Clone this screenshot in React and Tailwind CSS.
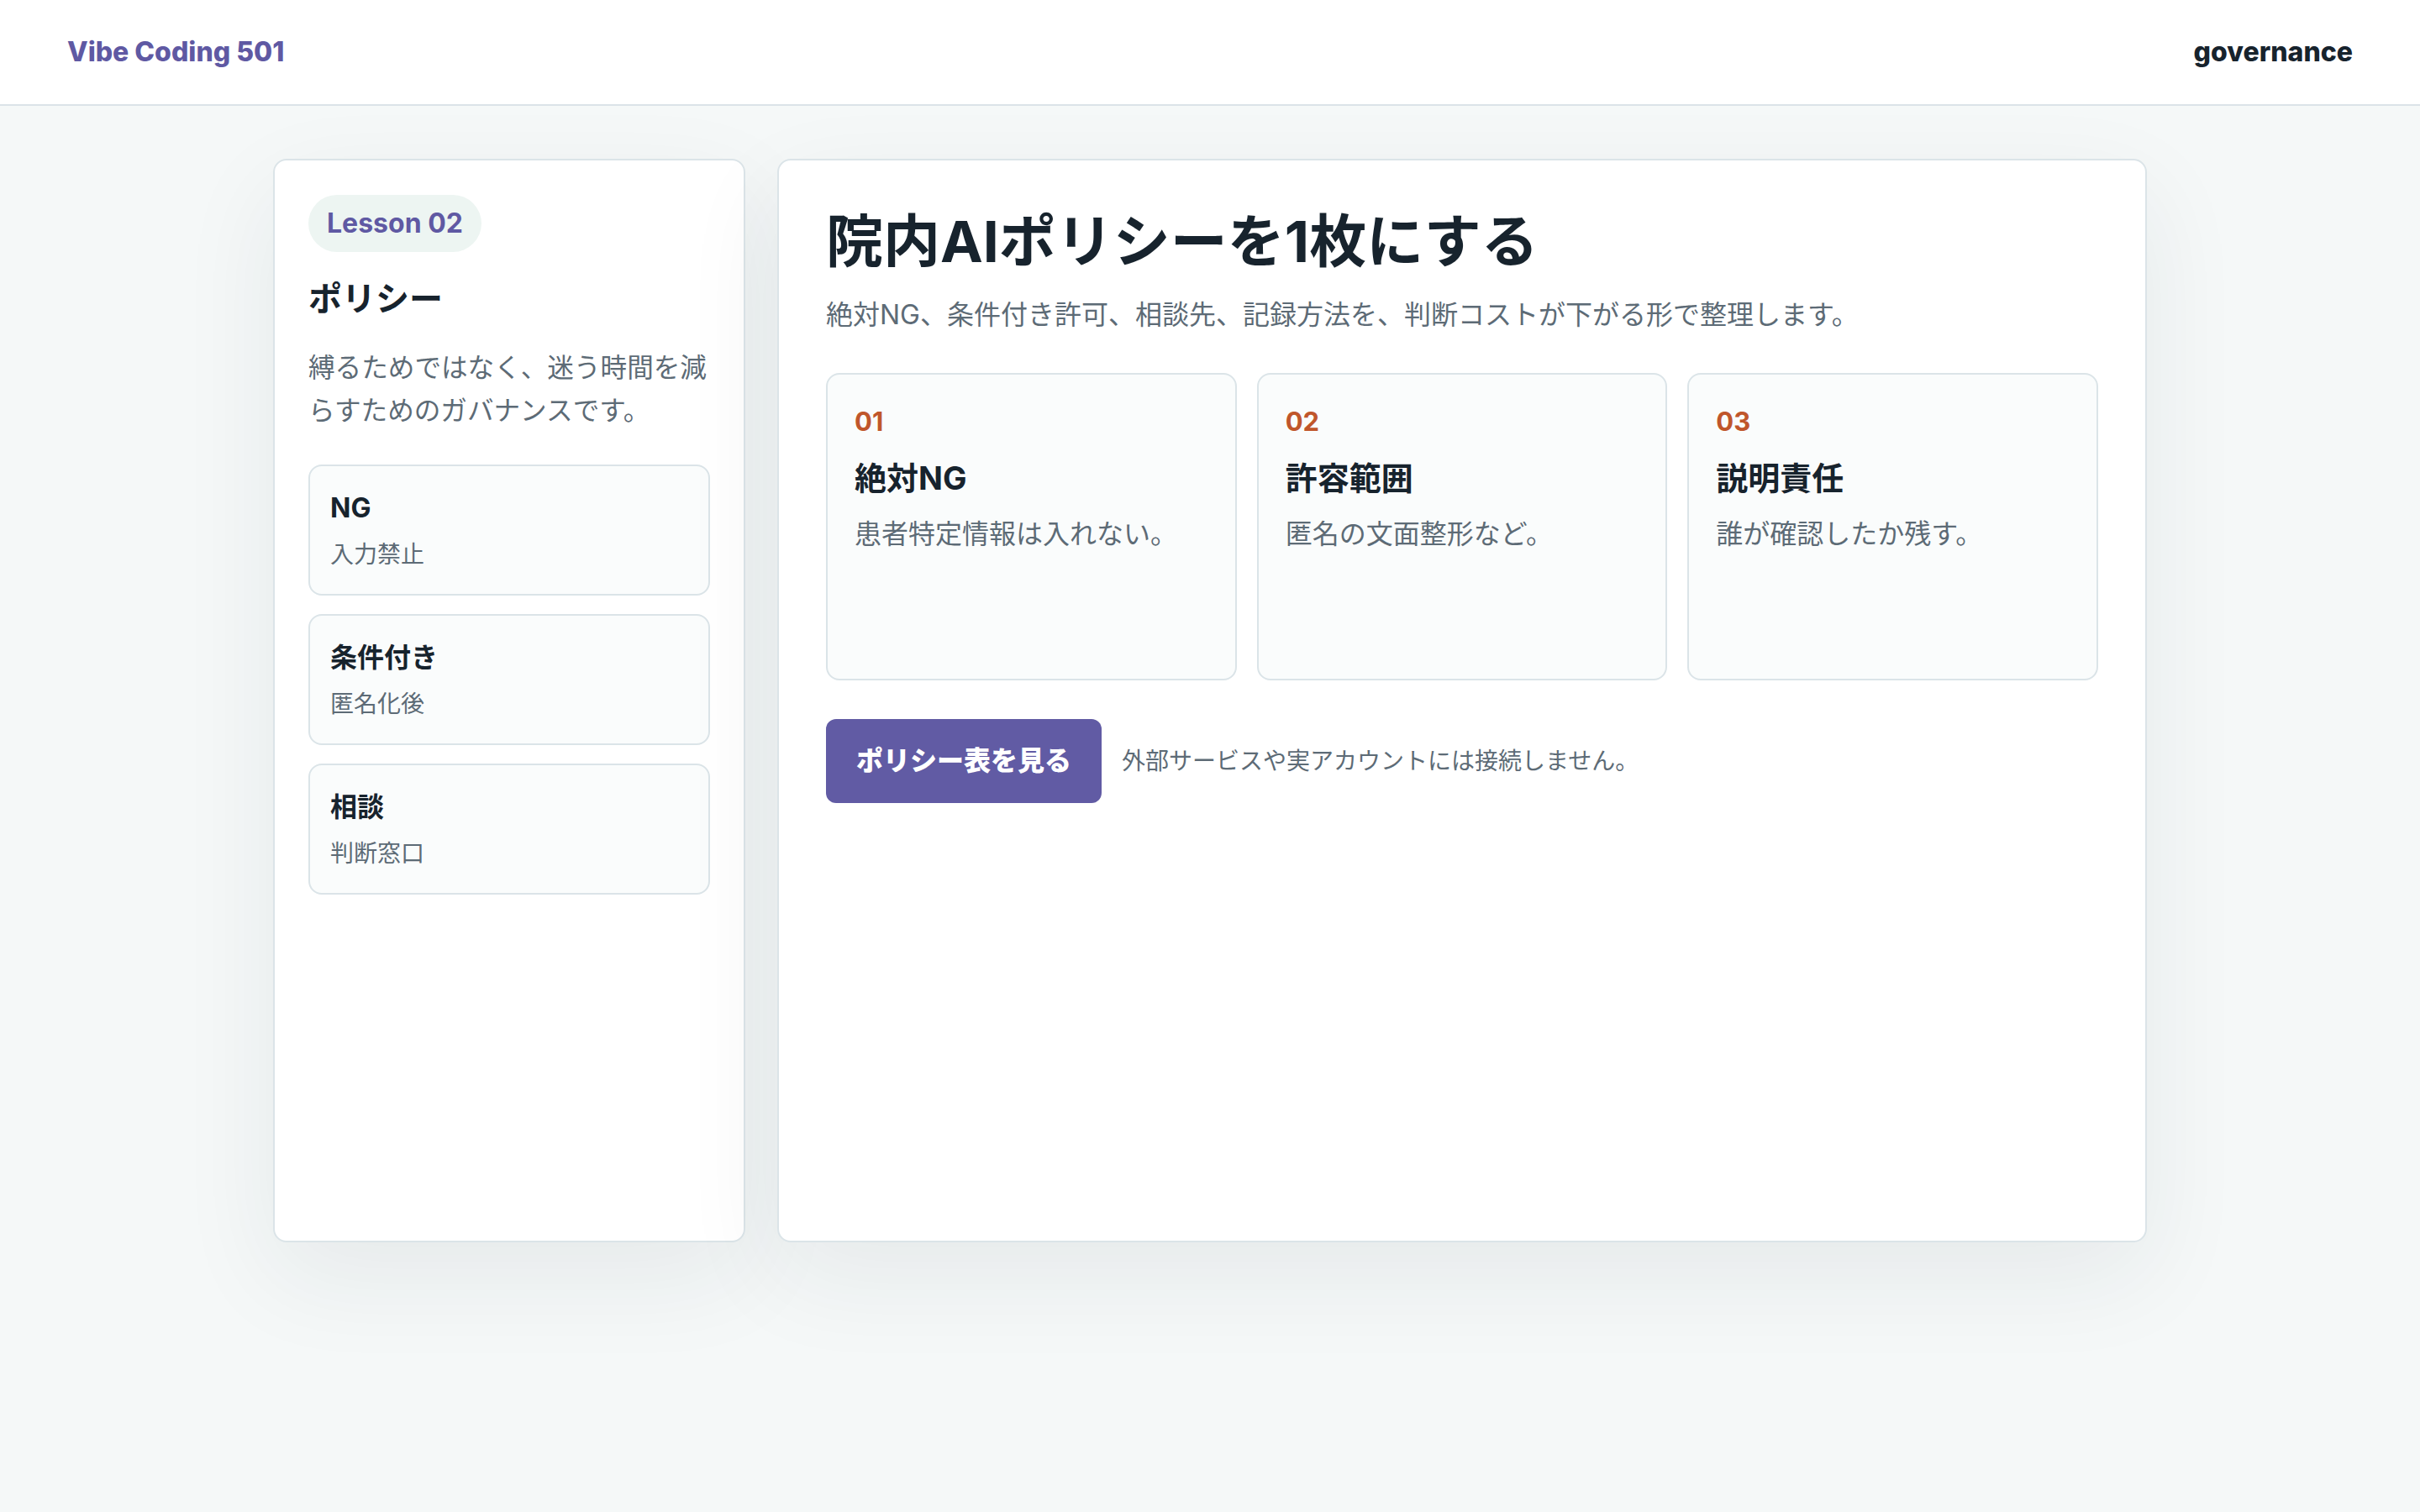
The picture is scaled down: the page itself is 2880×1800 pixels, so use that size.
import React from "react";

const FONT = { fontFamily: '"Inter", "Noto Sans CJK JP", "Noto Sans", sans-serif' };

function SideItem({ title, sub }) {
  return (
    <div className="rounded-2xl border-2 border-[#dbe4e8] bg-[#fafcfc] px-6 py-6">
      <div className="text-[32px] font-bold leading-[51px] text-[#17232d]">{title}</div>
      <div className="mt-2 text-[28px] leading-[45px] text-[#5d6b76]">{sub}</div>
    </div>
  );
}

function Feature({ num, title, desc }) {
  return (
    <div className="min-h-[366px] rounded-2xl border-2 border-[#dbe4e8] bg-[#fafcfc] p-8">
      <div className="text-[31px] font-bold leading-[48px] text-[#c0562b]">{num}</div>
      <div className="mt-4 text-[38px] font-bold leading-[54px] text-[#17232d]">{title}</div>
      <div className="mt-4 text-[32px] leading-[48px] text-[#5d6b76]">{desc}</div>
    </div>
  );
}

export default function App() {
  return (
    <div className="min-h-screen bg-[#f5f8f8] text-[#17232d]" style={FONT}>
      <header className="flex h-[126px] items-center justify-between border-b-2 border-[#dbe3e8] bg-white px-20">
        <div className="text-[32px] font-extrabold text-[#5f59a3]">Vibe Coding 501</div>
        <div className="text-[32px] font-extrabold text-[#17232d]">governance</div>
      </header>
      <main className="pt-[63px] pb-20">
        <div className="mx-auto grid w-[2230px] grid-cols-[562px_1fr] gap-[38px]">
          <aside className="h-[1290px] rounded-2xl border-2 border-[#dbe4e8] bg-white px-10 pt-[41px] pb-10 shadow-[0_40px_120px_rgba(23,40,50,0.07)]">
            <span className="inline-flex rounded-full bg-[#edf5f2] px-[22px] py-[10px] text-[32px] font-bold leading-[48px] text-[#5f59a3]">
              Lesson 02
            </span>
            <h2 className="mt-[28px] text-[40px] font-bold leading-[56px] text-[#17232d]">ポリシー</h2>
            <p className="mt-[28px] text-[31.6px] leading-[51px] text-[#5d6b76]">
              縛るためではなく、迷う時間を減らすためのガバナンスです。
            </p>
            <div className="mt-[39px] flex flex-col gap-[22px]">
              <SideItem title="NG" sub="入力禁止" />
              <SideItem title="条件付き" sub="匿名化後" />
              <SideItem title="相談" sub="判断窓口" />
            </div>
          </aside>
          <section className="h-[1290px] rounded-2xl border-2 border-[#dbe4e8] bg-white px-14 pt-[58px] pb-14 shadow-[0_40px_120px_rgba(23,40,50,0.07)]">
            <h1 className="text-[68px] font-bold leading-[76px] text-[#17232d]">院内AIポリシーを1枚にする</h1>
            <p className="mt-6 text-[32px] leading-[51px] text-[#5d6b76]">
              絶対NG、条件付き許可、相談先、記録方法を、判断コストが下がる形で整理します。
            </p>
            <div className="mt-[44px] grid grid-cols-3 gap-6">
              <Feature num="01" title="絶対NG" desc="患者特定情報は入れない。" />
              <Feature num="02" title="許容範囲" desc="匿名の文面整形など。" />
              <Feature num="03" title="説明責任" desc="誰が確認したか残す。" />
            </div>
            <div className="mt-[46px] flex items-center gap-6">
              <button className="h-[100px] rounded-xl bg-[#615ba4] px-9 text-[32px] font-black text-white">
                ポリシー表を見る
              </button>
              <span className="text-[28px] text-[#5d6b76]">外部サービスや実アカウントには接続しません。</span>
            </div>
          </section>
        </div>
      </main>
    </div>
  );
}
